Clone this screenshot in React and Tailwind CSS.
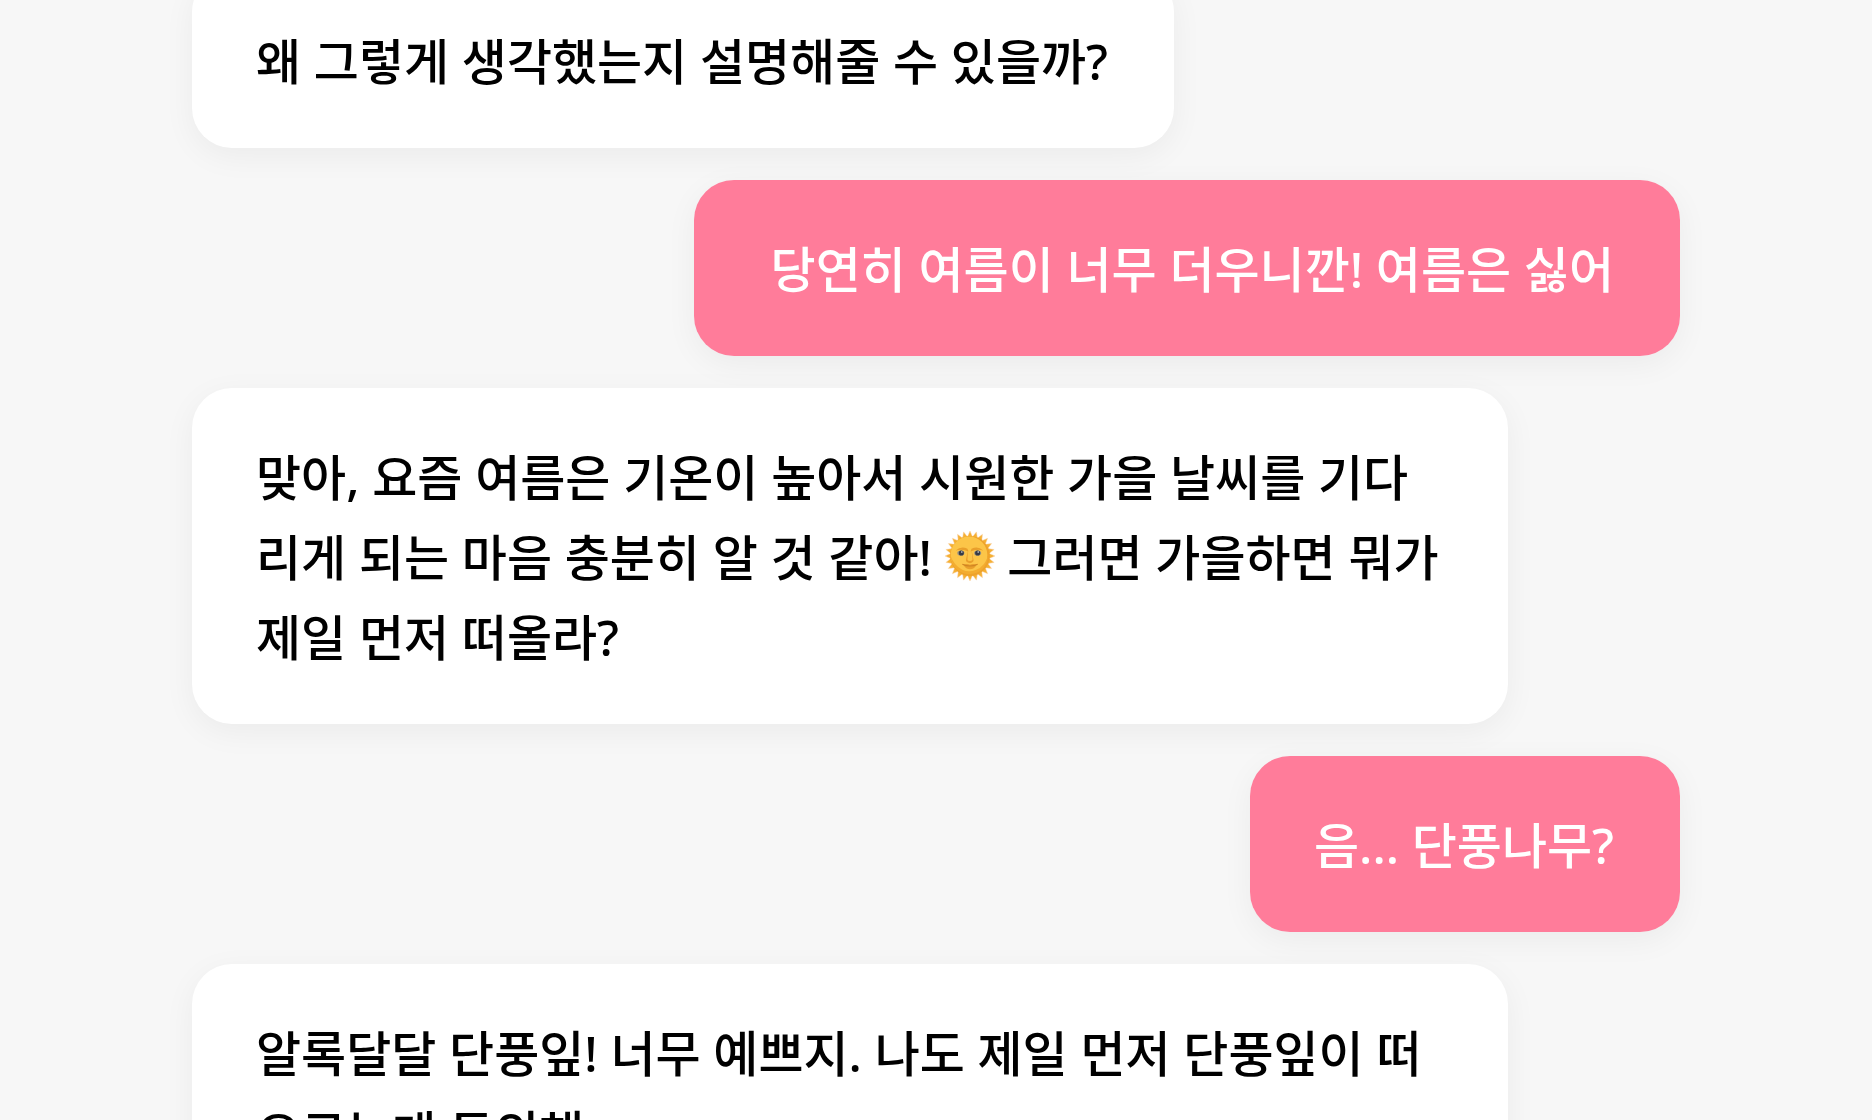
const messages = [
  { id: 1, from: 'friend', text: '왜 그렇게 생각했는지 설명해줄 수 있을까?' },
  { id: 2, from: 'me', text: ' 당연히 여름이 너무 더우니깐! 여름은 싫어' },
  {
    id: 3,
    from: 'friend',
    text: (
      <>
        맞아, 요즘 여름은 기온이 높아서 시원한 가을 날씨를 기다리게 되는 마음 충분히 알 것 같아! <SunFace /> 그러면 가을하면 뭐가 제일 먼저 떠올라?
      </>
    ),
  },
  { id: 4, from: 'me', text: '음... 단풍나무?' },
  { id: 5, from: 'friend', text: '알록달달 단풍잎! 너무 예쁘지. 나도 제일 먼저 단풍잎이 떠오르는게 동의해.' },
]

// 24 rays around the face
const rays = Array.from({ length: 48 }, (_, i) => {
  const r = i % 2 ? 38 : 49
  const a = (i * Math.PI) / 24
  return `${(50 + r * Math.sin(a)).toFixed(1)},${(50 - r * Math.cos(a)).toFixed(1)}`
}).join(' ')

function SunFace() {
  return (
    <svg viewBox="1 1 98 98" role="img" aria-label="해" className="inline-block size-[50px] align-[-5px]">
      <polygon points={rays} fill="#f5b032" stroke="#fbd5b0" strokeWidth="1" />
      <circle cx="50" cy="50" r="39" fill="#eea22b" />
      <circle cx="48" cy="48" r="36" fill="#fcc548" />
      <path d="M12 50q4 32 36 36q34-2 38-38q-6 22-24 29q-14 6-27 0q-16-8-23-27z" fill="#f3ac30" />
      <path d="M22 39q11-10 23-3l2 5q-11-5-25-2zM76 39q-11-10-23-3l-2 5q11-5 25-2z" fill="#e99f2b" />
      <path d="M46 38l-4 20q0 5 8 6q7-1 7-6l-4-20l2 19q-2 3-5 3q-4 0-5-3z" fill="#e99f2b" />
      <ellipse cx="32" cy="44" rx="7" ry="5" fill="#9a9484" />
      <ellipse cx="65" cy="44" rx="7" ry="5" fill="#9a9484" />
      <circle cx="33" cy="44" r="5" fill="#363b45" />
      <circle cx="65" cy="44" r="5" fill="#363b45" />
      <circle cx="34" cy="42" r="1.4" fill="#fff" />
      <circle cx="66" cy="42" r="1.4" fill="#fff" />
      <path d="M37 67q7-3 13 0q6-3 13 0q-5 9-13 9q-8 0-13-9z" fill="#e99f2b" />
      <path d="M35 66q15 7 30 0" fill="none" stroke="#cf8424" strokeWidth="2" />
    </svg>
  )
}

function Bubble({ mine, children }) {
  return (
    <li
      className={`max-w-[1316px] rounded-[40px] pt-[49px] pr-[66px] pb-[47px] pl-16 whitespace-pre-wrap shadow-[0_8px_32px_rgba(0,0,0,0.05)] ${
        mine ? 'self-end bg-[#ff7c9a] text-white' : 'self-start bg-white text-black'
      }`}
    >
      {children}
    </li>
  )
}

export default function App() {
  return (
    <main className="h-screen overflow-hidden bg-[#f7f7f7] px-48 font-['Noto_Sans','Noto_Sans_CJK_KR',sans-serif]">
      <ul className="-mt-7 flex flex-col gap-8 text-[49px] leading-[80px] font-medium">
        {messages.map(m => (
          <Bubble key={m.id} mine={m.from === 'me'}>{m.text}</Bubble>
        ))}
      </ul>
    </main>
  )
}
